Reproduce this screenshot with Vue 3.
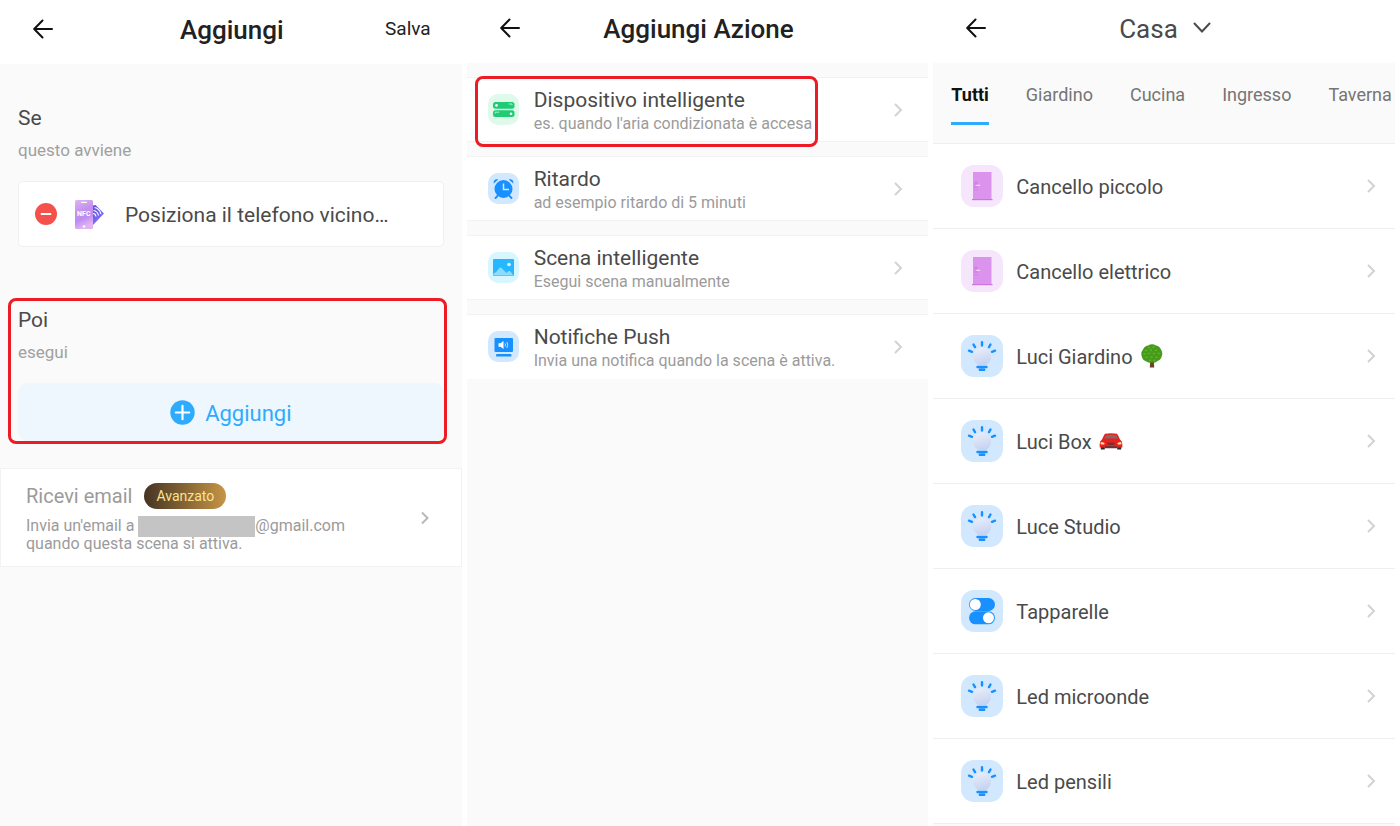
<!-- App.vue -->
<template>
  <div class="screens">
    <section class="screen">
      <header class="topbar topbar-tall">
        <button class="back" type="button" aria-label="Indietro">
          <svg width="20" height="20" viewBox="0 0 20 20"><path d="M19 10H2M9.5 1.5 1.2 10l8.3 8.5" /></svg>
        </button>
        <h1>Aggiungi</h1>
        <button class="save" type="button">Salva</button>
      </header>

      <div class="scene">
        <div class="block">
          <h2>Se</h2>
          <p class="hint">questo avviene</p>
          <div class="condition">
            <button class="remove" type="button" aria-label="Rimuovi">
              <svg width="22" height="22" viewBox="0 0 22 22">
                <circle cx="11" cy="11" r="11" fill="#f4514d" />
                <path d="M6.5 11h9" stroke="#fff" stroke-width="1.8" stroke-linecap="round" />
              </svg>
            </button>
            <span class="nfc">
              <svg width="29" height="29" viewBox="0 0 29 29">
                <defs>
                  <linearGradient id="nfcPhone" x1="0" y1="0" x2="0.3" y2="1">
                    <stop offset="0" stop-color="#dcb6f2" />
                    <stop offset="0.45" stop-color="#c690ee" />
                    <stop offset="0.7" stop-color="#bd8cf3" />
                    <stop offset="1" stop-color="#e0b4f2" />
                  </linearGradient>
                  <linearGradient id="nfcTag" x1="0" y1="0" x2="0.6" y2="1">
                    <stop offset="0" stop-color="#5550e6" />
                    <stop offset="1" stop-color="#8e74f4" />
                  </linearGradient>
                </defs>
                <path d="M18 5.5 20.5 5 29 13.5 18 25z" fill="url(#nfcTag)" />
                <g fill="none" stroke="#fff" stroke-width="1.1">
                  <path d="M19.5 7.5q5 1 6.500 6.500M18.500 10.500q4 .5 5 5M18 13.500q2.500 0 3 3" />
                </g>
                <rect width="18" height="29" rx="1.5" fill="url(#nfcPhone)" />
                <rect x="6" y="1.8" width="6" height="1.3" rx="0.6" fill="#fff" />
                <circle cx="9" cy="26.5" r="1.2" fill="#fff" />
                <text x="8.8" y="15.8" text-anchor="middle">NFC</text>
              </svg>
            </span>
            <span class="condition-text">Posiziona il telefono vicino…</span>
          </div>
        </div>

        <div class="block then">
          <h2>Poi</h2>
          <p class="hint">esegui</p>
          <button class="add" type="button">
            <svg width="25" height="25" viewBox="0 0 25 25">
              <circle cx="12.5" cy="12.5" r="12.2" fill="#2fabfd" />
              <path d="M12.5 5.8v13.4M5.8 12.5h13.4" stroke="#fff" stroke-width="2.2" stroke-linecap="round" />
            </svg>
            <span class="add-label">Aggiungi</span>
          </button>
        </div>
      </div>

      <button class="email" type="button">
        <span class="email-body">
          <span class="email-head">Ricevi email <span class="badge">Avanzato</span></span>
          <span class="email-text">
            Invia un'email a <span class="redacted"></span>@gmail.com<br />
            quando questa scena si attiva.
          </span>
        </span>
        <svg class="chevron dark" width="10" height="16" viewBox="0 0 10 16"><path d="M2 2.5 7.5 8 2 13.5" /></svg>
      </button>
    </section>

    <section class="screen">
      <header class="topbar">
        <button class="back" type="button" aria-label="Indietro">
          <svg width="20" height="20" viewBox="0 0 20 20"><path d="M19 10H2M9.5 1.5 1.2 10l8.3 8.5" /></svg>
        </button>
        <h1>Aggiungi Azione</h1>
      </header>

      <div class="actions">
        <button
          v-for="action in actions"
          :key="action.title"
          :class="['action', { highlighted: action.highlighted }]"
          type="button"
        >
          <svg v-if="action.icon === 'device'" class="action-icon" viewBox="0 0 31 31">
            <rect width="31" height="31" rx="10" fill="#dffaeb" />
            <rect x="5" y="8" width="21.5" height="6.8" rx="2.5" fill="#1fcb73" />
            <rect x="5" y="16.3" width="21.5" height="6.8" rx="2.5" fill="#1fcb73" />
            <circle cx="8.5" cy="11.4" r="1.3" fill="#fff" />
            <circle cx="23" cy="19.7" r="1.3" fill="#fff" />
            <path d="M20.5 10H24v1.200M7.200 19.700v-1.500h4" fill="none" stroke="#b9f0d3" stroke-width="0.9" />
          </svg>
          <svg v-else-if="action.icon === 'delay'" class="action-icon" viewBox="0 0 31 31">
            <rect width="31" height="31" rx="10" fill="#d1e8ff" />
            <circle cx="15.5" cy="16" r="9" fill="#1890ff" />
            <path d="M5.8 10.5C5 7.500 7.500 5.500 10.300 6.500zM25.200 10.500C26 7.500 23.500 5.500 20.700 6.500z" fill="#1890ff" />
            <path d="m9.5 23-2 2M21.500 23l2 2" stroke="#1890ff" stroke-width="1.8" stroke-linecap="round" />
            <path d="M15.5 10.5v6H21" fill="none" stroke="#d1e8ff" stroke-width="1.5" />
          </svg>
          <svg v-else-if="action.icon === 'scene'" class="action-icon" viewBox="0 0 31 31">
            <rect width="31" height="31" rx="10" fill="#d7f6ff" />
            <rect x="5" y="7" width="21" height="17" rx="1" fill="#25b7ff" />
            <path d="M5.5 23.5v-2q3.500-1.500 5-4.500 1.800-2.500 3.500-.5l4.500 4.500 1.500-1.500q1.500-1 2.800.5l2.700 3.500z" fill="#8bdcff" />
            <circle cx="21" cy="12.5" r="1.8" fill="#e6faff" />
          </svg>
          <svg v-else class="action-icon" viewBox="0 0 31 31">
            <rect width="31" height="31" rx="10" fill="#d1e8ff" />
            <rect x="6.500" y="7" width="18.500" height="14" rx="1" fill="#1890ff" />
            <rect x="8" y="23" width="15.500" height="2.600" rx="1.200" fill="#1890ff" />
            <path d="M10.500 12.300h2l3-2.300v8l-3-2.300h-2z" fill="#fff" />
            <path d="M17 12.500q1.200 1.500 0 3M18.800 11q2 3 0 6" fill="none" stroke="#d1e8ff" stroke-width="0.9" />
          </svg>
          <span class="action-body">
            <span class="action-title">{{ action.title }}</span>
            <span class="action-text">{{ action.text }}</span>
          </span>
          <svg class="chevron" width="10" height="16" viewBox="0 0 10 16"><path d="M2 2 8 8 2 14" /></svg>
        </button>
      </div>
    </section>

    <section class="screen">
      <header class="topbar">
        <button class="back" type="button" aria-label="Indietro">
          <svg width="20" height="20" viewBox="0 0 20 20"><path d="M19 10H2M9.5 1.5 1.2 10l8.3 8.5" /></svg>
        </button>
        <div class="home">
          <select v-model="home" aria-label="Casa">
            <option>Casa</option>
          </select>
          <svg width="18" height="12" viewBox="0 0 18 12"><path d="m1.500 1.500 7.500 8 7.500-8" /></svg>
        </div>
      </header>

      <nav class="rooms">
        <button
          v-for="name in rooms"
          :key="name"
          :class="['room', { active: name === room }]"
          type="button"
          @click="room = name"
        >
          {{ name }}
        </button>
      </nav>

      <ul class="devices">
        <li v-for="device in devices" :key="device.name">
          <button class="device" type="button">
            <svg v-if="device.icon === 'door'" class="device-icon" viewBox="0 0 42 42">
              <rect width="42" height="42" rx="13" fill="#f5e6fb" />
              <rect x="12" y="7" width="18.5" height="27.5" fill="#dc93ee" />
              <rect x="11" y="34" width="20.5" height="1.2" fill="#c878dc" />
              <rect x="13.5" y="16.5" width="3" height="9" rx="1" fill="#d57be9" />
              <path d="M14.5 20.3H19" stroke="#f8dcff" stroke-width="1.1" />
              <circle cx="15" cy="23.5" r="0.8" fill="#e8b1f5" />
            </svg>
            <svg v-else-if="device.icon === 'switch'" class="device-icon" viewBox="0 0 42 42">
              <rect width="42" height="42" rx="13" fill="#d1e8ff" />
              <rect x="8" y="8" width="26" height="13" rx="6.5" fill="#1890ff" />
              <rect x="8" y="21.3" width="26" height="13" rx="6.5" fill="#1890ff" />
              <circle cx="14.3" cy="14.5" r="5.5" fill="#fff" />
              <circle cx="27.5" cy="27.8" r="5.5" fill="#fff" />
            </svg>
            <svg v-else class="device-icon" viewBox="0 0 42 42">
              <defs>
                <linearGradient id="bulb" x1="0.3" y1="0" x2="0.6" y2="1">
                  <stop offset="0" stop-color="#e9edf9" />
                  <stop offset="1" stop-color="#c4d2f1" />
                </linearGradient>
              </defs>
              <rect width="42" height="42" rx="13" fill="#d1e8ff" />
              <path d="M12 21.500a9 9 0 1 1 14.500 7.200q-1 .8-1.500 1.300h-8q-.5-.8-1.500-1.500A9 9 0 0 1 12 21.500z" fill="url(#bulb)" />
              <path
                d="M21 7.200v3.200M12.500 9.500l1.500 2.600M29.500 9.500 28 12.100M8 15.700l3 1.100M34 15.700l-3 1.100"
                stroke="#1890ff"
                stroke-width="2.4"
                stroke-linecap="round"
              />
              <path d="M16.500 32h9M18.800 34.800h4.400" stroke="#1890ff" stroke-width="2.4" stroke-linecap="round" />
            </svg>
            <span class="device-name">{{ device.name }}</span>
            <svg v-if="device.emoji === 'tree'" width="24" height="24" viewBox="0 0 24 24" aria-hidden="true">
              <path d="M10.300 15h3.400l.5 8.500H9.800z" fill="#6b4528" />
              <path
                d="M8 1.500q4-2.500 8 0 3.500.5 5 4 2 3 .8 6.500-.8 4-4.300 5-2.500 2.500-5.500 1.200-3.500 1.300-6-1-3.500-1.200-4.300-5Q.5 8.500 3 5.500 4.500 2 8 1.500z"
                fill="#469b1b"
              />
              <path
                d="M8.500 3.500h1M13 3h1M5.500 6.500h1M10.500 6h1M15.500 6.300h1M4 10h1M8.500 9.500h1M13.500 9.500h1M18.500 9.500h1M6 13.300h1M11 13h1M16 13.300h1M9.500 16.300h1M14 16.300h1"
                stroke="#63b32c"
                stroke-width="1.5"
                stroke-linecap="round"
              />
            </svg>
            <svg v-if="device.emoji === 'car'" width="24" height="24" viewBox="0 0 24 24" aria-hidden="true">
              <path d="M1.800 17h4v3.500h-4zM18.200 17h4v3.500h-4z" fill="#2b2b2b" />
              <path d="M6 4.800q6-1.300 12 0 1.500 2 3 5.700 2.500 1.500 2.300 4.500v3.500H.7V15Q.5 12 3 10.500 4.500 6.800 6 4.800z" fill="#e8211d" />
              <path d="M7 6.200q5-1 10 0 1 1.500 1.700 3.500-6.700-1-13.400 0Q6 7.700 7 6.200z" fill="#8a6468" />
              <path d="M1.800 13q3.500 0 4 2-2.500 1-4.300 0zM22.200 13q-3.500 0-4 2 2.500 1 4.300 0z" fill="#f7e7a8" />
              <path d="M8 13.800h8l-1 2H9zM6 17.200h12v2H6z" fill="#5a3a3c" />
            </svg>
            <svg class="chevron" width="10" height="16" viewBox="0 0 10 16"><path d="M2 2 8 8 2 14" /></svg>
          </button>
        </li>
      </ul>
    </section>
  </div>
</template>

<script setup>
import { ref } from 'vue'

const home = ref('Casa')
const room = ref('Tutti')

const rooms = ['Tutti', 'Giardino', 'Cucina', 'Ingresso', 'Taverna']

const actions = [
  { icon: 'device', title: 'Dispositivo intelligente', text: "es. quando l'aria condizionata è accesa", highlighted: true },
  { icon: 'delay', title: 'Ritardo', text: 'ad esempio ritardo di 5 minuti' },
  { icon: 'scene', title: 'Scena intelligente', text: 'Esegui scena manualmente' },
  { icon: 'push', title: 'Notifiche Push', text: 'Invia una notifica quando la scena è attiva.' },
]

const devices = [
  { icon: 'door', name: 'Cancello piccolo' },
  { icon: 'door', name: 'Cancello elettrico' },
  { icon: 'light', name: 'Luci Giardino', emoji: 'tree' },
  { icon: 'light', name: 'Luci Box', emoji: 'car' },
  { icon: 'light', name: 'Luce Studio' },
  { icon: 'switch', name: 'Tapparelle' },
  { icon: 'light', name: 'Led microonde' },
  { icon: 'light', name: 'Led pensili' },
]
</script>

<style>
body {
  margin: 0;
  background: #fff;
}
</style>

<style scoped>
.screens {
  display: grid;
  grid-template-columns: repeat(3, minmax(0, 1fr));
  gap: 5px;
  min-height: 100vh;
  padding-right: 5px;
  box-sizing: border-box;
  font-family: Roboto, "Liberation Sans", sans-serif;
  color: #4a4a4a;
}

.screen {
  background: #fafafa;
  overflow: hidden;
}

button {
  margin: 0;
  padding: 0;
  border: 0;
  background: none;
  font: inherit;
  color: inherit;
  text-align: left;
  cursor: pointer;
}

svg {
  display: block;
  flex: none;
}

h1,
h2,
p,
ul {
  margin: 0;
  padding: 0;
}

/* top bar */
.topbar {
  display: grid;
  grid-template-columns: 1fr auto 1fr;
  align-items: center;
  height: 63px;
  padding: 0 31px 8px 33px;
  box-sizing: border-box;
  background: #fff;
}

.topbar-tall {
  height: 64px;
  padding-bottom: 7px;
}

.topbar h1 {
  padding-top: 2px;
  font-size: 26px;
  line-height: 32px;
  font-weight: 500;
  color: #212121;
}

.back {
  justify-self: start;
}

.back path {
  fill: none;
  stroke: #111;
  stroke-width: 2;
  stroke-linecap: round;
  stroke-linejoin: round;
}

.save {
  justify-self: end;
  font-size: 19px;
  color: #212121;
}

/* scene */
.scene {
  padding: 40px 18px 0;
}

.block h2 {
  font-size: 21px;
  line-height: 28px;
  font-weight: 400;
}

.hint {
  margin-top: 6px;
  font-size: 17px;
  line-height: 24px;
  color: #a0a0a0;
}

.condition {
  display: flex;
  align-items: center;
  height: 66px;
  margin-top: 19px;
  padding-left: 16px;
  box-sizing: border-box;
  border: 1px solid #f0f0f0;
  border-radius: 5px;
  background: #fff;
}

.nfc {
  margin: 0 21px 0 18px;
}

.nfc text {
  font-size: 7px;
  font-weight: 700;
  fill: #fff;
}

.condition-text {
  padding-top: 2px;
  font-size: 21px;
}

.then {
  position: relative;
  margin-top: 59px;
}

.then::after {
  content: '';
  position: absolute;
  inset: -8px -3px -3px -10px;
  border: 3px solid #ed1c24;
  border-radius: 8px;
  pointer-events: none;
}

.add {
  display: flex;
  align-items: center;
  justify-content: center;
  gap: 10px;
  width: 100%;
  height: 58px;
  margin-top: 19px;
  border-radius: 9px;
  background: #eef7fd;
  font-size: 22px;
  color: #2fabfd;
}

.add-label {
  padding-top: 2px;
}

.email {
  display: flex;
  align-items: center;
  justify-content: space-between;
  width: 100%;
  margin-top: 27px;
  padding: 13px 31px 13px 25px;
  box-sizing: border-box;
  border: 1px solid #f2f2f2;
  background: #fff;
  color: #9b9b9b;
}

.email-head {
  display: flex;
  align-items: center;
  gap: 12px;
  font-size: 20px;
  line-height: 28px;
}

.badge {
  padding: 0 12px;
  border-radius: 13px;
  background: linear-gradient(90deg, #453423, #c69546);
  font-size: 14px;
  line-height: 26px;
  color: #fbe38e;
}

.email-text {
  display: block;
  margin-top: 7px;
  font-size: 16px;
  line-height: 18px;
}

.redacted {
  display: inline-block;
  width: 117px;
  height: 21px;
  margin: -4px 0;
  vertical-align: middle;
  background: #c4c4c4;
}

.chevron {
  margin-left: auto;
}

.chevron path {
  fill: none;
  stroke: #d2d2d2;
  stroke-width: 2;
}

.chevron.dark path {
  stroke: #b8b8b8;
}

/* actions */
.actions {
  display: flex;
  flex-direction: column;
  gap: 14px;
  padding-top: 14px;
}

.action {
  position: relative;
  display: flex;
  align-items: center;
  height: 65px;
  padding: 0 25px 0 21px;
  border-top: 1px solid #f2f2f2;
  border-bottom: 1px solid #f2f2f2;
  box-sizing: border-box;
  background: #fff;
}

.action:last-child {
  border-bottom-color: #fff;
}

.action-icon {
  width: 31px;
  height: 31px;
}

.action-body {
  margin-left: 15px;
  padding-top: 2px;
}

.action-title,
.action-text {
  display: block;
}

.action-title {
  font-size: 21px;
  line-height: 26px;
}

.action-text {
  font-size: 16px;
  line-height: 22px;
  color: #9b9b9b;
}

.highlighted::after {
  content: '';
  position: absolute;
  inset: -2px 110px -6px 8px;
  border: 3px solid #ed1c24;
  border-radius: 8px;
  pointer-events: none;
}

/* devices */
.home {
  position: relative;
  display: flex;
  align-items: center;
}

.home select {
  appearance: none;
  margin: 0;
  padding: 2px 33px 0 0;
  border: 0;
  background: none;
  font: inherit;
  font-size: 26px;
  line-height: 32px;
  color: #4a4a4a;
}

.home svg {
  position: absolute;
  right: 0;
  pointer-events: none;
}

.home path {
  fill: none;
  stroke: #4a4a4a;
  stroke-width: 2;
  stroke-linecap: round;
}

.rooms {
  display: flex;
  gap: 37px;
  height: 80px;
  padding: 16px 0 18px 18px;
  box-sizing: border-box;
  overflow: hidden;
}

.room {
  flex: none;
  padding-bottom: 12px;
  border-bottom: 3px solid transparent;
  font-size: 18px;
  color: #757575;
}

.room.active {
  border-color: #2fabfd;
  font-weight: 700;
  color: #111;
}

.devices {
  list-style: none;
  border-top: 1px solid #efefef;
  background: #fff;
}

.device {
  display: flex;
  align-items: center;
  width: 100%;
  height: 85px;
  padding: 0 19px 0 28px;
  box-sizing: border-box;
  border-bottom: 1px solid #efefef;
}

.device-icon {
  width: 42px;
  height: 42px;
}

.device-name {
  margin: 0 7px 0 13px;
  padding-top: 2px;
  font-size: 20px;
}
</style>
